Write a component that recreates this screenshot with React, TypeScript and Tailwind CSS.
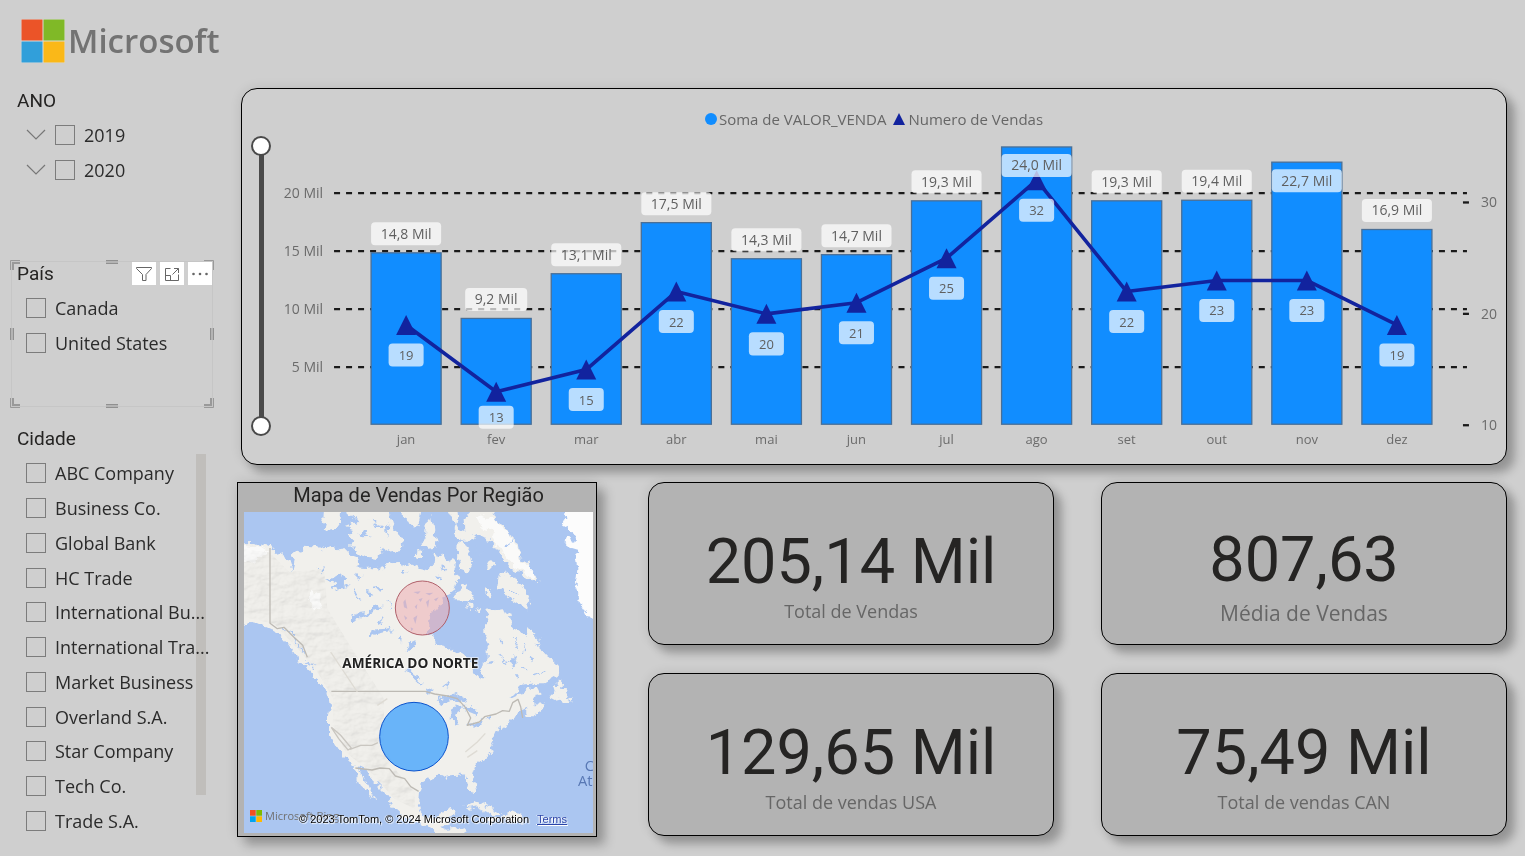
import type { ReactNode } from "react";

type Month = { name: string; sales: number; label: string; count: number };

const months: Month[] = [
  { name: "jan", sales: 14.85, label: "14,8 Mil", count: 19 },
  { name: "fev", sales: 9.2, label: "9,2 Mil", count: 13 },
  { name: "mar", sales: 13.05, label: "13,1 Mil", count: 15 },
  { name: "abr", sales: 17.45, label: "17,5 Mil", count: 22 },
  { name: "mai", sales: 14.34, label: "14,3 Mil", count: 20 },
  { name: "jun", sales: 14.69, label: "14,7 Mil", count: 21 },
  { name: "jul", sales: 19.33, label: "19,3 Mil", count: 25 },
  { name: "ago", sales: 23.97, label: "24,0 Mil", count: 32 },
  { name: "set", sales: 19.33, label: "19,3 Mil", count: 22 },
  { name: "out", sales: 19.38, label: "19,4 Mil", count: 23 },
  { name: "nov", sales: 22.66, label: "22,7 Mil", count: 23 },
  { name: "dez", sales: 16.86, label: "16,9 Mil", count: 19 },
];

const cities = [
  "ABC Company",
  "Business Co.",
  "Global Bank",
  "HC Trade",
  "International Bu...",
  "International Tra...",
  "Market Business",
  "Overland S.A.",
  "Star Company",
  "Tech Co.",
  "Trade S.A.",
];

const BASE = 294;
const salesY = (v: number) => BASE - v * 11.6;
const countY = (v: number) => BASE - (v - 10) * 11.13;
const monthX = (i: number) => 124 + i * 90;

function Tag({ x, y, w, size, children }: { x: number; y: number; w: number; size: number; children: ReactNode }) {
  return (
    <g>
      <rect x={x - w / 2} y={y - 11.5} width={w} height={23} rx={4} fill="#ffffff" fillOpacity={0.7} />
      <text x={x} y={y + 5} textAnchor="middle" fontSize={size} fill="#5f5f5f">
        {children}
      </text>
    </g>
  );
}

function ComboChart() {
  const line = months.map((m, i) => `${monthX(i)},${countY(m.count)}`).join(" ");
  return (
    <svg
      viewBox="0 0 1223 333"
      className="block h-auto min-w-0 flex-1"
      role="img"
      aria-label="Soma de VALOR_VENDA e Numero de Vendas por mês"
    >
      {[5, 10, 15, 20].map((v) => (
        <g key={v}>
          <text x={41} y={salesY(v) + 5} textAnchor="end" fontSize={14} fill="#6b6b6b">
            {v} Mil
          </text>
          <line x1={52} x2={1184} y1={salesY(v)} y2={salesY(v)} stroke="#1a1a1a" strokeWidth={2.3} strokeDasharray="6 6" />
        </g>
      ))}
      {[10, 20, 30].map((v) => (
        <g key={v}>
          <line x1={1180} x2={1186} y1={countY(v)} y2={countY(v)} stroke="#1a1a1a" strokeWidth={2.3} />
          <text x={1214} y={countY(v) + 5} textAnchor="end" fontSize={14} fill="#6b6b6b">
            {v}
          </text>
        </g>
      ))}
      {months.map((m, i) => (
        <g key={m.name}>
          <rect
            x={monthX(i) - 35}
            y={salesY(m.sales)}
            width={70}
            height={BASE - salesY(m.sales) - 1}
            fill="#118dff"
            stroke="#4a6f96"
            strokeWidth={1.3}
          />
          <text x={monthX(i)} y={313} textAnchor="middle" fontSize={13} fill="#6b6b6b">
            {m.name}
          </text>
        </g>
      ))}
      <polyline points={line} fill="none" stroke="#12239e" strokeWidth={3.6} strokeLinejoin="round" />
      {months.map((m, i) => {
        const x = monthX(i);
        const y = countY(m.count);
        return <path key={m.name} d={`M${x} ${y - 10}L${x + 10} ${y + 10}H${x - 10}Z`} fill="#12239e" />;
      })}
      {months.map((m, i) => {
        const top = salesY(m.sales);
        return (
          <g key={m.name}>
            <Tag x={monthX(i)} y={m.sales > 20 ? top + 18.5 : top - 19} w={m.sales < 10 ? 62 : 70} size={14}>
              {m.label}
            </Tag>
            <Tag x={monthX(i)} y={Math.min(countY(m.count) + 30, 286)} w={35} size={13}>
              {m.count}
            </Tag>
          </g>
        );
      })}
    </svg>
  );
}

const thumb =
  "pointer-events-none absolute inset-0 m-0 h-full w-full appearance-none bg-transparent [direction:rtl] [writing-mode:vertical-lr] [&::-webkit-slider-thumb]:pointer-events-auto [&::-webkit-slider-thumb]:h-5 [&::-webkit-slider-thumb]:w-5 [&::-webkit-slider-thumb]:appearance-none [&::-webkit-slider-thumb]:rounded-full [&::-webkit-slider-thumb]:border-2 [&::-webkit-slider-thumb]:border-[#4a4a4a] [&::-webkit-slider-thumb]:bg-white";

function ZoomSlider() {
  return (
    <div className="relative mt-[5px] ml-[9px] flex h-[300px] w-5 shrink-0 justify-center py-2">
      <div className="w-[5px] bg-[#4a4a4a]" />
      <input type="range" min={0} max={100} defaultValue={100} aria-label="Zoom máximo" className={thumb} />
      <input type="range" min={0} max={100} defaultValue={0} aria-label="Zoom mínimo" className={thumb} />
    </div>
  );
}

function CheckItem({ label }: { label: string }) {
  return (
    <label className="flex min-h-0 flex-1 items-center gap-[9px] whitespace-nowrap">
      <input
        type="checkbox"
        className="h-5 w-5 shrink-0 appearance-none border border-[#7c7c7c] checked:bg-[#4a4a4a]"
      />
      <span className="text-[18px] leading-6">{label}</span>
    </label>
  );
}

function SlicerTitle({ children }: { children: ReactNode }) {
  return <h2 className="pt-px pl-[17px] font-[Roboto] text-[19px] leading-6 text-[#252423]">{children}</h2>;
}

function Corner({ className }: { className: string }) {
  return (
    <svg viewBox="0 0 10 10" aria-hidden="true" className={`absolute h-[10px] w-[10px] ${className}`}>
      <path d="M.5 10V.5H10" fill="none" stroke="#999" />
      <path d="M3 10V3H10" fill="none" stroke="#999" strokeWidth={2} />
    </svg>
  );
}

function SelectionFrame() {
  return (
    <div aria-hidden="true" className="pointer-events-none absolute inset-y-0 left-[11px] right-[24px] border border-[#c6c6c6]">
      <Corner className="-top-[2px] -left-[2px]" />
      <Corner className="-top-[2px] -right-[2px] rotate-90" />
      <Corner className="-right-[2px] -bottom-[2px] rotate-180" />
      <Corner className="-bottom-[2px] -left-[2px] -rotate-90" />
      <span className="absolute -top-[2px] left-1/2 h-1 w-3 -translate-x-1/2 border-y border-[#909090] bg-[#b4b4b4]" />
      <span className="absolute -bottom-[2px] left-1/2 h-1 w-3 -translate-x-1/2 border-y border-[#909090] bg-[#b4b4b4]" />
      <span className="absolute top-1/2 -left-[2px] h-3 w-1 -translate-y-1/2 border-x border-[#909090] bg-[#b4b4b4]" />
      <span className="absolute top-1/2 -right-[2px] h-3 w-1 -translate-y-1/2 border-x border-[#909090] bg-[#b4b4b4]" />
    </div>
  );
}

function VisualActions() {
  const button = "flex h-[23px] w-6 items-center justify-center bg-white text-[#666]";
  return (
    <div className="absolute top-px right-[25px] flex gap-1">
      <button type="button" aria-label="Filtros" className={button}>
        <svg viewBox="0 0 16 16" className="h-4 w-4" fill="none" stroke="currentColor">
          <path d="M.5 1.5H15.500V2.500L10 8.500V14.500H6.500V8.500L.5 2.500Z" />
        </svg>
      </button>
      <button type="button" aria-label="Modo de foco" className={button}>
        <svg viewBox="0 0 16 16" className="h-4 w-4" fill="none" stroke="currentColor">
          <path d="M6.500 2.500H1.500V14.500H14.500V8.500M1.500 9.500H6.500V14.500M10 2.500H14.500V7M14.500 2.500L8.500 8.500" />
        </svg>
      </button>
      <button type="button" aria-label="Mais opções" className={button}>
        <svg viewBox="0 0 16 4" className="h-1 w-4" fill="currentColor">
          <circle cx={1.5} cy={2} r={1.3} />
          <circle cx={8} cy={2} r={1.3} />
          <circle cx={14.5} cy={2} r={1.3} />
        </svg>
      </button>
    </div>
  );
}

function Sidebar() {
  return (
    <aside className="w-[237px] shrink-0 text-[#2b2b2b]">
      <div className="flex h-[63px] items-center gap-[3px] pt-[19px] pl-[21px]">
        <svg viewBox="0 0 44 44" className="h-11 w-11 shrink-0" aria-hidden="true">
          <rect width="44" height="44" fill="#dadada" />
          <rect x=".5" y=".5" width="21" height="21" fill="#eb5428" />
          <rect x="22.5" y=".5" width="21" height="21" fill="#80b927" />
          <rect x=".5" y="22.5" width="21" height="21" fill="#319fda" />
          <rect x="22.5" y="22.5" width="21" height="21" fill="#fab818" />
        </svg>
        <span className="pb-[2px] text-[33px] leading-none font-semibold text-[#737373]">Microsoft</span>
      </div>

      <section className="mt-[25px]">
        <SlicerTitle>ANO</SlicerTitle>
        <div className="mt-1 flex h-[70px] flex-col">
          {["2019", "2020"].map((year) => (
            <div key={year} className="flex flex-1 items-center gap-[9px] pl-[26px]">
              <button type="button" aria-label={`Expandir ${year}`} className="flex h-5 w-5 items-center justify-center text-[#777]">
                <svg viewBox="0 0 20 12" className="h-3 w-5" fill="none" stroke="currentColor">
                  <path d="M1 1L10 10L19 1" strokeWidth={1.2} />
                </svg>
              </button>
              <CheckItem label={year} />
            </div>
          ))}
        </div>
      </section>

      <section className="relative mt-[74px] h-[146px]">
        <SelectionFrame />
        <SlicerTitle>País</SlicerTitle>
        <VisualActions />
        <div className="mt-1 flex h-[70px] flex-col pl-[26px]">
          <CheckItem label="Canada" />
          <CheckItem label="United States" />
        </div>
      </section>

      <section className="relative mt-[19px]">
        <SlicerTitle>Cidade</SlicerTitle>
        <div aria-hidden="true" className="absolute top-[28px] right-[31px] h-[341px] w-[10px] bg-[#c0bebb]" />
        <div className="relative mt-[5px] flex h-[382px] flex-col pl-[26px]">
          {cities.map((c) => (
            <CheckItem key={c} label={c} />
          ))}
        </div>
      </section>
    </aside>
  );
}

const shadow = "shadow-[8px_8px_10px_rgba(0,0,0,0.26),0_0_12px_rgba(0,0,0,0.1)]";

function ChartCard() {
  return (
    <section className={`ml-1 rounded-[16px] border border-black bg-[#cfcfcf] pt-[18px] ${shadow}`}>
      <div className="flex h-6 items-center justify-center gap-[7px] text-[15px] text-[#666]">
        <span className="flex items-center gap-[2px]">
          <svg viewBox="0 0 12 12" className="h-3 w-3" aria-hidden="true">
            <circle cx={6} cy={6} r={6} fill="#118dff" />
          </svg>
          Soma de VALOR_VENDA
        </span>
        <span className="flex items-center gap-[3px]">
          <svg viewBox="0 0 12 12" className="h-3 w-3" aria-hidden="true">
            <path d="M6 0L12 12H0Z" fill="#12239e" />
          </svg>
          Numero de Vendas
        </span>
      </div>
      <div className="flex gap-[11px]">
        <ZoomSlider />
        <ComboChart />
      </div>
    </section>
  );
}

function MapDrawing() {
  return (
    <svg viewBox="0 0 1047 963" preserveAspectRatio="xMidYMid slice" className="h-full w-full" role="img" aria-label="Mapa da América do Norte">
      <defs>
        <filter id="relief" x="0" y="0" width="100%" height="100%">
          <feTurbulence type="fractalNoise" baseFrequency="0.018 0.03" numOctaves={4} seed={4} result="n" />
          <feDiffuseLighting in="n" surfaceScale={9} lightingColor="#ffffff" result="l">
            <feDistantLight azimuth={225} elevation={62} />
          </feDiffuseLighting>
          <feComposite in="l" in2="SourceGraphic" operator="in" />
        </filter>
        <filter id="coast" filterUnits="userSpaceOnUse" x="-20" y="-20" width="1087" height="1003">
          <feTurbulence type="fractalNoise" baseFrequency="0.045" numOctaves={3} seed={7} result="n" />
          <feDisplacementMap in="SourceGraphic" in2="n" scale={30} xChannelSelector="R" yChannelSelector="G" />
        </filter>
      </defs>
      <rect width="1047" height="963" fill="#abc6f1" />
      <g filter="url(#coast)">
        <g fill="#f1f0ec">
          {/* mainland */}
          <path
            d="M-20 92L30 90L50 100L78 106L98 118L118 132L134 142L143 172L150 140L138 130L152 118L166 122L180 104L200 106L212 92L232 112L258 98L282 112L300 110L318 128L340 136L346 158L330 166L368 168L398 164L418 178L430 150L446 154L464 150L482 160L500 156L522 166L548 172L566 160L570 122L584 142L598 122L612 150L628 144L634 184L650 196L636 214L628 236L606 250L598 262L580 290L560 310L553 335L552 362L568 374L574 396L602 402L630 416L658 430L684 448L690 480L706 502L718 494L712 456L728 440L728 408L740 396L724 368L724 340L736 316L724 298L738 290L756 298L776 294L800 304L804 338L826 356L842 374L856 344L868 362L886 380L890 410L904 430L926 448L946 466L944 490L924 502L900 514L866 514L838 518L818 538L796 560L826 546L850 530L880 530L888 546L868 558L872 578L898 570L904 584L880 594L852 612L842 606L852 590L828 598L812 612L800 622L792 642L766 652L768 640L754 652L746 670L748 684L740 700L746 716L728 734L706 752L690 770L684 790L692 812L698 840L688 846L674 826L664 794L650 788L622 790L600 796L574 794L552 802L530 816L522 838L520 872L530 900L546 920L566 926L588 914L598 896L624 890L630 898L616 924L612 940L580 950L560 944L530 936L500 926L470 908L446 888L440 866L420 840L394 814L378 796L360 772L346 766L356 796L374 820L386 850L398 864L386 860L370 838L350 820L340 798L344 790L330 762L302 734L280 710L262 678L252 650L252 612L258 580L254 552L250 538L236 522L214 508L210 484L186 460L160 450L154 428L132 396L106 368L78 350L46 336L20 330L-20 338Z"
          />
          {/* central america and caribbean */}
          <path d="M566 946L588 936L606 950L632 948L660 950L668 958L640 980H570Z" />
          <path d="M664 882L690 870L718 878L750 892L774 904L748 912L722 898L696 886L676 890ZM776 908L800 898L834 912L842 928L812 930L780 922ZM732 914L752 914L758 928L740 928Z" />
          {/* newfoundland and nova scotia */}
          <path d="M916 556L928 540L940 506L952 508L948 530L964 532L980 568L960 570L948 560L932 564ZM850 596L872 586L894 574L908 580L888 598L862 612L848 608Z" />
          {/* arctic islands */}
          <path d="M240 -20L292 -20L290 24L272 50L254 54L238 30Z" />
          <path d="M300 -20L432 -20L446 34L462 72L478 98L470 116L438 122L420 110L398 138L362 134L338 116L318 96L328 84L312 68L330 58L308 42L340 30L328 14L310 14Z" />
          <path d="M470 -20L534 -20L524 38L510 54L496 26L474 14Z" />
          <path d="M548 34L562 12L568 58L578 84L572 108L552 110L536 90L546 70Z" />
          <path d="M608 -20L636 -20L640 26L632 52L640 78L664 92L694 66L716 78L746 96L764 126L786 150L800 168L832 184L850 206L878 210L886 186L858 176L850 148L828 142L826 104L810 80L790 66L780 40L754 26L744 -20L690 -20L662 20L664 60L644 54Z" />
          <path d="M638 90L664 94L676 110L684 150L672 186L646 176L650 150L636 128Z" />
          <path d="M662 212L680 238L692 254L668 268L634 264L636 238L652 232Z" />
          <path d="M770 180L796 192L822 206L840 228L858 256L848 292L830 278L800 262L782 240L762 226Z" />
          <path d="M732 150L748 144L758 166L738 174L726 162ZM666 276L686 282L680 294L664 288ZM722 230L746 240L738 250L720 244ZM514 126L530 112L540 136L526 142L512 136Z" />
          <path d="M698 282L712 290L706 300Z" />
        </g>
        {/* greenland */}
        <path fill="#fcfcfc" d="M958 -20L1080 -20V318L1030 316L1018 292L1000 262L1004 240L996 214L1000 170L994 130L1012 116L984 108L962 92L968 74L996 90L990 60L956 40L964 24Z" />
        {/* snowfields */}
        <path
          fill="#fcfcfb"
          opacity=".85"
          d="M-20 96L50 104L76 120L40 138L20 150L-20 156ZM198 232L226 244L230 288L210 302L198 270ZM700 8L744 20L780 50L800 82L822 110L826 142L850 158L880 188L868 208L846 184L818 168L790 140L772 112L742 86L752 58L712 44Z"
        />
        {/* lakes */}
        <g fill="#abc6f1">
          <path d="M244 208L262 200L290 190L308 198L296 210L316 222L298 226L280 234L262 228L270 216ZM224 168L238 166L232 180ZM322 316L346 302L372 300L394 286L414 276L404 294L384 308L358 312L340 326L326 324ZM360 240L380 242L388 254L370 252ZM390 222L412 228L406 240ZM336 182L352 190L344 198ZM372 370L398 352L432 350L450 358L422 360L398 366L380 376ZM488 420L498 398L520 388L514 402L500 418ZM462 376L472 370L468 396ZM490 470L502 466L506 486L524 500L534 518L522 514L508 502ZM546 534L562 526L560 540L548 542ZM596 520L618 516L612 526Z" />
          <path d="M580 566L606 548L634 540L656 556L664 572L640 566L612 568L592 576ZM622 590L640 584L658 580L642 600L636 622L634 642L624 638ZM660 578L684 580L700 600L696 616L680 604L670 600ZM672 638L700 628L714 620L708 634L684 646ZM716 618L744 606L736 620Z" />
          <path d="M730 454L752 446L750 456ZM796 450L812 436L818 448L806 466ZM850 440L872 436L864 448ZM876 390L886 388L882 404ZM770 384L778 392L770 398ZM814 490L824 490L820 504ZM576 190L590 196L580 204ZM474 184L492 182L484 192Z" />
          <path d="M380 20L398 28L388 36L420 48L396 48ZM340 66L366 58L360 70L388 74L352 76ZM426 30L436 50L428 78ZM690 108L716 118L700 128ZM592 154L604 168L596 180ZM528 150L550 154L542 164Z" />
        </g>
        <path
          fill="none"
          stroke="#abc6f1"
          strokeWidth={4}
          strokeLinecap="round"
          d="M330 240L350 260M404 330L420 318M432 270L440 290M640 120L630 160M184 450L206 462M150 380L178 420M118 350L150 370M812 380L820 410M842 392L838 424M760 430L790 452M830 470L850 476M900 480L870 488M800 230L820 250M810 90L790 100M840 200L820 190"
        />
      </g>
      {/* terrain relief over the western ranges */}
      <path
        filter="url(#relief)"
        opacity=".28"
        style={{ mixBlendMode: "multiply" }}
        d="M0 112L78 122L136 180L240 170L250 290L330 420L420 560L420 700L460 780L512 840L512 890L450 860L390 790L305 720L266 640L268 560L220 480L170 420L90 335L0 315Z"
      />
      {/* borders */}
      <g fill="none" stroke="#bdbab4" strokeWidth={4} strokeLinejoin="round">
        <path d="M78 108V334L100 350L120 346L150 376L176 400L190 436" />
        <path d="M262 538H544L572 546L610 552L640 560L664 586L680 618L670 640L706 630L722 614L756 606L776 596L796 598L806 572L822 562L830 584L836 618" />
        <path d="M334 768L384 774L408 768L436 770L454 792L482 800L500 824L524 838" />
      </g>
      <path d="M262 646L284 680L312 714L322 708L290 670ZM318 712L350 700L384 700L402 692" fill="none" stroke="#c9c6c0" strokeWidth={4} />
      <path d="M664 720L700 690L724 664M670 736L700 716M430 560L400 580M340 540L300 480L260 420" fill="none" stroke="#dedbd4" strokeWidth={4} />
      {/* small lakes under the northern bubble */}
      <path
        fill="#abc6f1"
        d="M478 270L484 262L490 290L480 286ZM508 240L530 238L522 246ZM512 284L520 276L518 292ZM546 270L556 262L552 288ZM544 244L568 242L556 250ZM480 310L490 318L484 324ZM508 318L520 310L514 336ZM570 262L584 256L576 268ZM500 346L508 350L502 358ZM524 262L536 258L530 270Z"
      />
      {/* sales bubbles */}
      <circle cx={535} cy={288} r={81} fill="#eda8ae" fillOpacity={0.52} stroke="#b0606a" strokeWidth={3} />
      <circle cx={510} cy={674} r={103} fill="#4fa8fb" fillOpacity={0.84} stroke="#0a52cc" strokeWidth={3} />
      <text x={499} y={467} textAnchor="middle" fontSize={41} fontWeight={700} fill="#222" stroke="#fff" strokeWidth={5} strokeOpacity={0.7} paintOrder="stroke">
        AMÉRICA DO NORTE
      </text>
      <text x={1022} y={776} fontSize={44} fill="#5878b4">
        C
      </text>
      <text x={1002} y={823} fontSize={44} fill="#5878b4">
        At
      </text>
    </svg>
  );
}

function MapCard() {
  return (
    <section className={`w-[360px] shrink-0 border border-black bg-[#b3b3b3] pr-[3px] pb-[3px] pl-[6px] ${shadow}`}>
      <h2 className="h-[29px] text-center font-[Roboto] text-[20px] leading-[25px] text-[#252423]">
        Mapa de Vendas Por Região
      </h2>
      <div className="relative h-[321px] overflow-hidden">
        <MapDrawing />
        <div className="absolute bottom-[9px] left-[6px] flex items-center gap-[3px] text-[11px] leading-4 text-[#707070]">
          <svg viewBox="0 0 12 12" className="h-3 w-3" aria-hidden="true">
            <path fill="#f25022" d="M0 0H5.700V5.700H0Z" />
            <path fill="#7fba00" d="M6.300 0H12V5.700H6.300Z" />
            <path fill="#00a4ef" d="M0 6.300H5.700V12H0Z" />
            <path fill="#ffb900" d="M6.300 6.300H12V12H6.300Z" />
          </svg>
          Microsoft Bing
        </div>
        <div className="absolute bottom-[6px] left-[55px] flex gap-2 font-['Liberation_Sans',sans-serif] text-[11px] leading-4 whitespace-nowrap text-black [text-shadow:1px_1px_1px_#fff,-1px_0_1px_#fff]">
          <span>© 2023 TomTom, © 2024 Microsoft Corporation</span>
          <a href="#terms" className="text-[#2b44a8] underline">
            Terms
          </a>
        </div>
      </div>
    </section>
  );
}

function KpiCard({ value, label, large = false }: { value: string; label: string; large?: boolean }) {
  return (
    <section
      className={`flex h-[163px] flex-col items-center rounded-[16px] border border-black bg-[#b3b3b3] ${large ? "pt-11" : "pt-[46px]"} ${shadow}`}
    >
      <p className="font-[Roboto] text-[63px] leading-[66px] text-[#252423]">{value}</p>
      <h2 className={`mt-1 text-[#666] ${large ? "text-[21px] leading-8" : "text-[18px] leading-6"}`}>{label}</h2>
    </section>
  );
}

export default function App() {
  return (
    <div className="flex min-h-screen bg-[#cfcfcf] font-['Open_Sans','Noto_Sans',sans-serif]">
      <Sidebar />
      <main className="min-w-0 flex-1 pt-[88px] pr-[18px] pb-[18px]">
        <ChartCard />
        <div className="mt-[17px] flex gap-[51px]">
          <MapCard />
          <div className="grid flex-1 grid-cols-2 content-start gap-x-[47px] gap-y-7">
            <KpiCard value="205,14 Mil" label="Total de Vendas" />
            <KpiCard value="807,63" label="Média de Vendas" large />
            <KpiCard value="129,65 Mil" label="Total de vendas USA" />
            <KpiCard value="75,49 Mil" label="Total de vendas CAN" />
          </div>
        </div>
      </main>
    </div>
  );
}
